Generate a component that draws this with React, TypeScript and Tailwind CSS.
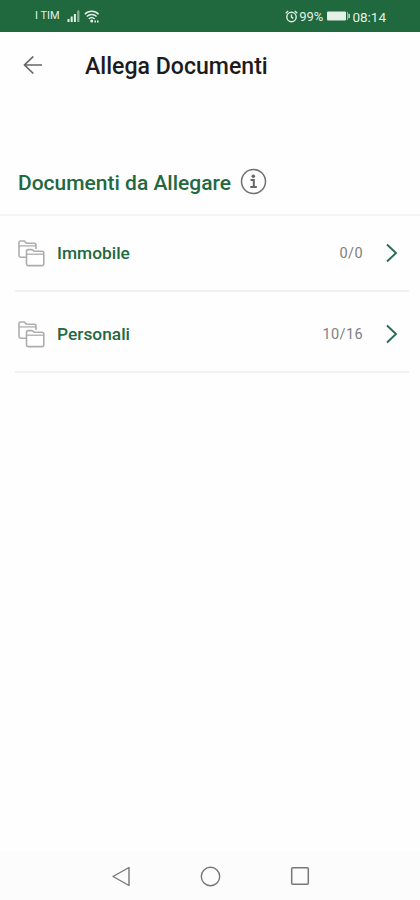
import React from "react";

function StatusBar() {
  return (
    <div className="flex h-8 shrink-0 items-center bg-[#20683e] pr-[34px] pl-[35px] text-[#e3f0e6]">
      <span className="text-[11px] leading-8 whitespace-nowrap">I TIM</span>
      <svg className="ml-[7px] shrink-0" width="14" height="12" viewBox="0 0 14 12" fill="currentColor">
        <rect x="0.5" y="9" width="2" height="3" />
        <rect x="3.7" y="6.5" width="2" height="5.5" />
        <rect x="6.9" y="4" width="2" height="8" />
        <rect x="10.2" y="0.5" width="2.2" height="11.5" opacity="0.55" />
      </svg>
      <svg className="ml-[3px] shrink-0" width="16" height="13" viewBox="0 0 16 13" fill="none" stroke="currentColor" strokeWidth="1.4">
        <path d="M0.8 4.2C4.5 0.2 11 0.2 14.6 4.2M2.8 6.6C5.5 3.8 10 3.8 12.6 6.6M4.8 8.9C6.5 7.3 9 7.3 10.6 8.9" />
        <circle cx="7.7" cy="11" r="0.8" fill="currentColor" />
        <path d="M10.5 11.5h1.5M13 11.5h1.5" strokeWidth="1.8" />
      </svg>
      <div className="ml-auto flex items-center">
        <svg width="13" height="13" viewBox="0 0 13 13" fill="none" stroke="currentColor" strokeWidth="1.4">
          <circle cx="6.5" cy="7" r="4.7" />
          <path d="M6.5 4.5V7.2L8.3 8.3M0.7 3.2L3.2 1M12.3 3.2L9.8 1" />
        </svg>
        <span className="ml-[1px] pt-px text-[13px] leading-8">99%</span>
        <svg className="ml-[4px]" width="24" height="10" viewBox="0 0 24 10" fill="currentColor">
          <rect x="0" y="0.5" width="19" height="9" rx="1" />
          <rect x="20" y="1" width="1" height="8" opacity="0.6" />
          <rect x="21.5" y="2.8" width="1.3" height="4.4" />
        </svg>
        <span className="ml-[1px] pt-px text-[13.5px] leading-8">08:14</span>
      </div>
    </div>
  );
}

function Folders() {
  return (
    <svg className="shrink-0" width="27" height="27" viewBox="0 0 27 27" fill="none" stroke="#adadad" strokeWidth="1.6" strokeLinejoin="round">
      <path d="M8 17.2H2.6Q1 17.2 1 15.6V2.6Q1 1 2.6 1H6.4L8.4 3.2H16.2Q18 3.2 18 5V9" />
      <path d="M1 5.9H18" strokeWidth="1.3" />
      <path d="M8.5 12V11.2Q8.5 9.6 10.1 9.6H14L16 11.2H24Q25.8 11.2 25.8 13V24Q25.8 25.6 24.2 25.6H10.1Q8.5 25.6 8.5 24Z" fill="#fff" />
      <path d="M8.5 14.2H25.8" strokeWidth="1.3" />
    </svg>
  );
}

function Row({ label, count }: { label: string; count: string }) {
  return (
    <div className="mr-[11px] ml-[15px] flex h-[81px] items-center border-b-2 border-[#f1f1f1] pt-[6px] pl-[3px]">
      <Folders />
      <span className="ml-3 text-[17.35px] font-medium text-[#23683f]">{label}</span>
      <span className="ml-auto text-[14.5px] tracking-[0.4px] text-[#808080]">{count}</span>
      <svg className="mr-[11px] mb-[2px] ml-[23px] shrink-0" width="12" height="20" viewBox="0 0 12 20" fill="none" stroke="#286c50" strokeWidth="1.9">
        <path d="M1 1.5L10 10L1 18.5" />
      </svg>
    </div>
  );
}

export default function App() {
  return (
    <div className="flex h-[900px] w-[420px] flex-col overflow-hidden bg-[#fefefe] font-['Roboto',sans-serif]">
      <StatusBar />
      <header className="flex h-[68px] shrink-0 items-center pl-[23px]">
        <svg width="20" height="20" viewBox="0 0 20 20" fill="none" stroke="#666666" strokeWidth="1.7">
          <path d="M19 9H1.5M10.3 0.5L1.5 9L10.3 17.5" />
        </svg>
        <h1 className="ml-[42px] pt-[2px] text-[23.1px] font-medium text-[#1c1c1c]">Allega Documenti</h1>
      </header>
      <section className="mt-[50px] flex h-[66px] shrink-0 items-center border-b-2 border-[#f5f5f5] pl-[18px]">
        <h2 className="pt-[3px] text-[21px] font-medium text-[#23683f]">Documenti da Allegare</h2>
        <svg className="mb-[2px] ml-[9px]" width="27" height="27" viewBox="0 0 27 27" fill="none" stroke="#707070">
          <circle cx="13.5" cy="13.5" r="12" strokeWidth="1.5" />
          <circle cx="13.3" cy="8.3" r="1.8" fill="#666" stroke="none" />
          <path d="M10.5 12H13.8V18.5M10.3 19H16.8" stroke="#666" strokeWidth="2" />
        </svg>
      </section>
      <main className="-mt-[5px] flex-1">
        <Row label="Immobile" count="0/0" />
        <Row label="Personali" count="10/16" />
      </main>
      <nav className="flex h-[49px] shrink-0 items-center justify-center gap-[69px] bg-[#fcfcfc] pt-px">
        <svg width="20" height="21" viewBox="0 0 20 21" fill="none" stroke="#777" strokeWidth="1.4" strokeLinejoin="round">
          <path d="M18 1.5V19.5L2 10.5Z" />
        </svg>
        <svg width="21" height="21" viewBox="0 0 21 21" fill="none" stroke="#777" strokeWidth="1.4">
          <circle cx="10.5" cy="10.5" r="9.2" />
        </svg>
        <svg width="20" height="20" viewBox="0 0 20 20" fill="none" stroke="#777" strokeWidth="1.5">
          <rect x="1.7" y="1.7" width="16.6" height="16.6" rx="1" />
        </svg>
      </nav>
    </div>
  );
}
